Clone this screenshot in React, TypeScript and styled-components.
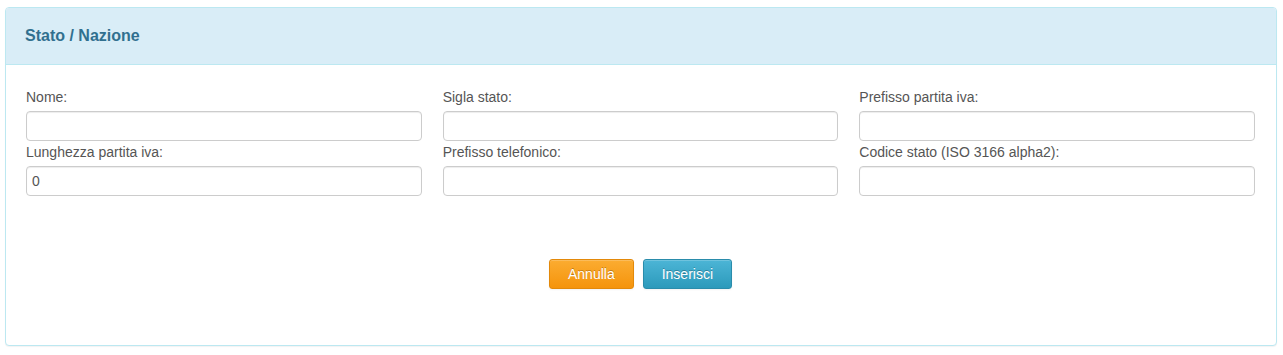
import React from 'react'
import styled, { createGlobalStyle } from 'styled-components'

const GlobalStyle = createGlobalStyle`
  body {
    margin: 0;
    padding: 7px 6px 8px 5px;
    background: #ffffff;
    font-family: 'Liberation Sans', Arial, Helvetica, sans-serif;
    font-size: 14px;
    color: #555555;
  }
`

const Panel = styled.section`
  border: 1px solid #bce8f1;
  border-radius: 4px;
  background: #ffffff;
  box-shadow: 0 1px 1px rgba(0, 0, 0, 0.05);
  overflow: hidden;
`

const PanelHeading = styled.header`
  background: #d9edf7;
  border-bottom: 1px solid #bce8f1;
  padding: 18px 19px 18px 19px;
`

const Title = styled.h3`
  margin: 0;
  font-size: 16px;
  line-height: 20px;
  font-weight: bold;
  color: #31708f;
`

const PanelBody = styled.div`
  padding: 23px 21px 56px 20px;
`

const FieldGrid = styled.div`
  display: grid;
  grid-template-columns: repeat(3, 1fr);
  column-gap: 21px;
  row-gap: 2px;
`

const Field = styled.div`
  display: flex;
  flex-direction: column;
`

const Label = styled.label`
  display: block;
  font-size: 14px;
  line-height: 18px;
  color: #555555;
  margin-bottom: 5px;
`

const TextInput = styled.input`
  box-sizing: border-box;
  height: 30px;
  width: 100%;
  margin: 0;
  padding: 4px 5px;
  font-family: 'Liberation Sans', Arial, Helvetica, sans-serif;
  font-size: 14px;
  color: #555555;
  background: #ffffff;
  border: 1px solid #cccccc;
  border-radius: 4px;
  box-shadow: inset 0 1px 1px rgba(0, 0, 0, 0.075);
  outline: none;
`

const Actions = styled.div`
  display: flex;
  justify-content: center;
  gap: 9px;
  margin-top: 63px;
`

const ActionButton = styled.button<{ variant: 'warning' | 'info' }>`
  box-sizing: border-box;
  height: 30px;
  padding: 0 18px;
  font-family: 'Liberation Sans', Arial, Helvetica, sans-serif;
  font-size: 14px;
  color: #ffffff;
  text-shadow: 0 -1px 0 rgba(0, 0, 0, 0.25);
  border-radius: 3px;
  cursor: pointer;
  box-shadow: inset 0 1px 0 rgba(255, 255, 255, 0.2), 0 1px 2px rgba(0, 0, 0, 0.05);
  background: ${(p) =>
    p.variant === 'warning'
      ? 'linear-gradient(to bottom, #fbac31, #f5940c)'
      : 'linear-gradient(to bottom, #4cb5d6, #2c9abb)'};
  border: 1px solid ${(p) => (p.variant === 'warning' ? '#e3890a' : '#2a8cab')};
`

const fields: { label: string; value?: string }[] = [
  { label: 'Nome:' },
  { label: 'Sigla stato:' },
  { label: 'Prefisso partita iva:' },
  { label: 'Lunghezza partita iva:', value: '0' },
  { label: 'Prefisso telefonico:' },
  { label: 'Codice stato (ISO 3166 alpha2):' },
]

const App = (): React.ReactElement => {
  return (
    <>
      <GlobalStyle />
      <Panel>
        <PanelHeading>
          <Title>Stato / Nazione</Title>
        </PanelHeading>
        <PanelBody>
          <FieldGrid>
            {fields.map((f) => (
              <Field key={f.label}>
                <Label>{f.label}</Label>
                <TextInput type="text" defaultValue={f.value ?? ''} />
              </Field>
            ))}
          </FieldGrid>
          <Actions>
            <ActionButton variant="warning">Annulla</ActionButton>
            <ActionButton variant="info">Inserisci</ActionButton>
          </Actions>
        </PanelBody>
      </Panel>
    </>
  )
}

export default App
